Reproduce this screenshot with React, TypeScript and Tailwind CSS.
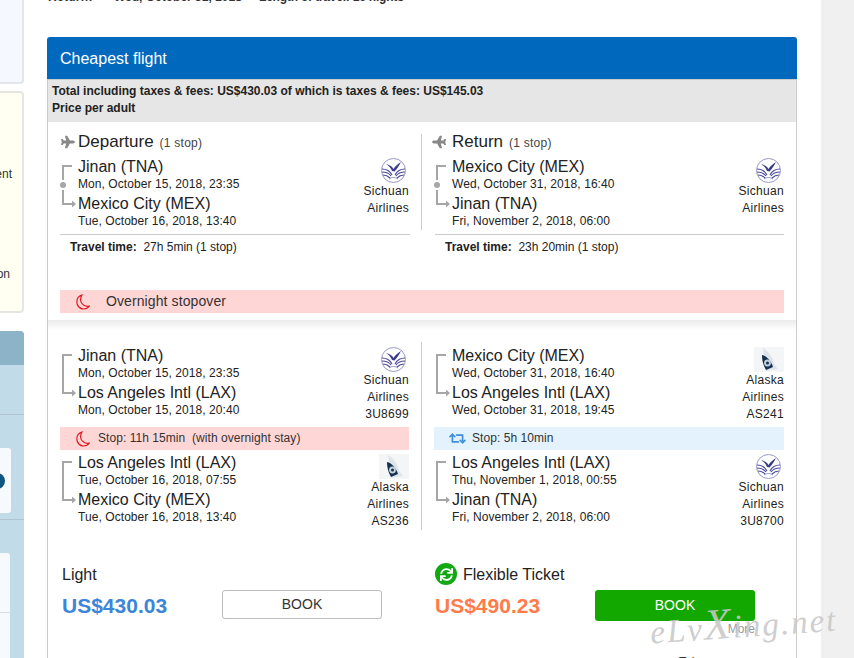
import { FaPlane, FaRetweet, FaSync } from 'react-icons/fa'

type Leg = { from: string; fromTime: string; to: string; toTime: string }

function RouteLine({ dot = false }: { dot?: boolean }) {
  return (
    <svg width="18" height="74" viewBox="0 0 18 74" className="shrink-0" fill="none">
      {dot ? (
        <>
          <path d="M12 10H3V24" stroke="#a6a6a6" strokeWidth="2" />
          <path d="M3 34V48H13" stroke="#a6a6a6" strokeWidth="2" />
          <circle cx="3" cy="29" r="3" fill="#a6a6a6" />
        </>
      ) : (
        <path d="M12 10H3V48H13" stroke="#a6a6a6" strokeWidth="2" />
      )}
      <path d="M12 44.5L16 48L12 51.5Z" fill="#a6a6a6" />
    </svg>
  )
}

function SichuanLogo() {
  return (
    <svg width="25" height="25" viewBox="0 0 25 25" fill="none">
      <circle cx="12.5" cy="12.5" r="12" fill="#ffffff" stroke="#9a9ac8" />
      <path d="M5 6C8 7 11 8 12.5 11C14 8 17 6 20 4C18 8 16 11 13.5 13.5L11 13C10 10 8 8 5 6Z" fill="#3c3c8c" />
      <path d="M1 11C6 11 9 13 11 17M1 14C5 14 8 15 10 18M2 17C5 17 7 18 9 20M24 11C19 11 16 13 14 17M24 14C20 14 17 15 15 18M23 17C20 17 18 18 16 20" stroke="#4a4a9c" strokeWidth="1.2" />
      <path d="M8 21C11 19 14 19 17 21" stroke="#8c8cc4" />
    </svg>
  )
}

function AlaskaLogo() {
  return (
    <div className="w-[30px] h-[25px] bg-[#f3f5f7]">
      <svg width="30" height="25" viewBox="0 0 30 25" fill="none">
        <path d="M9 1C14 4 19 10 20 17L24 22L12 24Z" fill="#dfe4ea" />
        <path d="M8 8C13 9 17 14 19 20L12 23C9 18 8 13 8 8Z" fill="#14304f" />
        <circle cx="13.5" cy="16" r="3.4" fill="#c6d2dc" />
        <circle cx="13.5" cy="16" r="1.5" fill="#14304f" />
      </svg>
    </div>
  )
}

function Airline({ logo, lines }: { logo: 'sichuan' | 'alaska'; lines: string[] }) {
  return (
    <div className="mt-[2px] flex flex-col items-end text-right text-[12px] leading-[17px] tracking-[0.3px] text-[#222]">
      {logo === 'sichuan' ? (
        <div className="w-[28px]">
          <SichuanLogo />
        </div>
      ) : (
        <AlaskaLogo />
      )}
      {lines.map((line) => (
        <span key={line}>{line}</span>
      ))}
    </div>
  )
}

function Segment({
  leg,
  dot,
  logo,
  lines,
}: {
  leg: Leg
  dot?: boolean
  logo: 'sichuan' | 'alaska'
  lines: string[]
}) {
  return (
    <div className="flex h-[74px] justify-between">
      <div className="flex">
        <RouteLine dot={dot} />
        <div className="text-[#222]">
          <div className="h-[21px] text-[16px] leading-[22px]">{leg.from}</div>
          <div className="h-[16px] text-[12px] leading-[14px] tracking-[0.07px]">{leg.fromTime}</div>
          <div className="h-[21px] text-[16px] leading-[22px]">{leg.to}</div>
          <div className="h-[16px] text-[12px] leading-[14px] tracking-[0.07px]">{leg.toTime}</div>
        </div>
      </div>
      <Airline logo={logo} lines={lines} />
    </div>
  )
}

function MoonIcon() {
  return (
    <svg width="14" height="16" viewBox="0 0 14 16" fill="none">
      <path d="M6 1C2.5 2 0.8 5 0.8 8C0.8 12 4 15 7.5 15C10 15 12 14 13.3 12.2C9 13 5 10 4.6 6.5C4.4 4.3 5 2.5 6 1Z" stroke="#e0141c" strokeWidth="1.2" />
    </svg>
  )
}

function DirectionHead({ title, back }: { title: string; back?: boolean }) {
  return (
    <div className="flex items-center h-[20px] mb-[4px] text-[#222]">
      {back ? (
        <FaPlane className="w-[14px] h-[14px] text-[#888888] -ml-[2px] mr-[6px] -scale-x-100" />
      ) : (
        <FaPlane className="w-[14px] h-[14px] text-[#888888] ml-[1px] mr-[3px]" />
      )}
      <span className="text-[17px] leading-[22px]">{title}</span>
      <span className="text-[12px] ml-[6px] mt-[2px] tracking-[0.25px] text-[#444]">(1 stop)</span>
    </div>
  )
}

function TravelTime({ time }: { time: string }) {
  return (
    <div className="border-t border-[#cccccc] mt-[4px] pt-[4px] pl-[10px] text-[12px] leading-[17px] text-[#222]">
      <b>Travel time:</b>&nbsp; {time} (1 stop)
    </div>
  )
}

function Fare({
  title,
  price,
  priceClass,
  flexible,
  children,
}: {
  title: string
  price: string
  priceClass: string
  flexible?: boolean
  children: React.ReactNode
}) {
  return (
    <div>
      <div className="flex items-center h-[22px] text-[16px] text-[#222]">
        {flexible && (
          <span className="w-[22px] h-[22px] mr-[6px] rounded-full bg-[#12a812] border border-dotted border-[#12a812] flex items-center justify-center">
            <FaSync className="w-[13px] h-[13px] text-white" />
          </span>
        )}
        <span className="pt-[2px]">{title}</span>
      </div>
      <div className="flex mt-[5px]">
        <div className={`w-[160px] pt-[4px] text-[21px] leading-[24px] font-bold ${priceClass}`}>{price}</div>
        {children}
      </div>
    </div>
  )
}

function Sidebar() {
  return (
    <div className="w-[24px] shrink-0 text-[12px] text-[#333]">
      <div className="h-[84px] bg-[#f5f9ff] border-r-2 border-b-2 border-[#e3e6ea] rounded-br-[4px]" />
      <div className="mt-[7px] h-[222px] bg-[#fffff2] border-2 border-l-0 border-[#e6e6e0] rounded-r-[4px] flex flex-col items-end pr-[10px]">
        <div className="mt-[74px] leading-[14px]">ent</div>
        <div className="mt-[86px] pr-[2px] leading-[14px]">on</div>
      </div>
      <div className="mt-[18px] h-[327px] bg-[#c2dbe8] rounded-tr-[4px] overflow-hidden">
        <div className="h-[34px] bg-[#8db3c8]" />
        <div className="h-[50px] border-b border-[#b0c4d0]" />
        <div className="mt-[33px] h-[65px] w-[11px] bg-[#f7fafc] rounded-r-[3px] flex items-center overflow-hidden">
          <span className="block shrink-0 w-[16px] h-[16px] -ml-[11px] bg-[#0f5580] rounded-full" />
        </div>
        <div className="mt-[6px] border-t border-[#b0c4d0]" />
        <div className="mt-[33px] h-[106px] w-[10px] bg-[#f7fafc] rounded-tr-[3px]">
          <div className="h-[60px] border-b border-[#d5dde2]" />
        </div>
      </div>
    </div>
  )
}

export default function App() {
  return (
    <div className='relative w-[854px] h-[658px] overflow-hidden bg-[#f0f0f0] flex font-["Liberation_Sans",Arial,sans-serif]'>
      <div className="w-[821px] h-full bg-white flex shrink-0">
        <Sidebar />
        <div className="pl-[23px] w-[773px]">
          {/* summary line, scrolled mostly out of view */}
          <div className="h-[37px] overflow-hidden">
            <div className="-mt-[10px] pl-px flex text-[12px] leading-[14px] font-bold text-[#333]">
              <span className="w-[66px] tracking-[0.3px]">Return:</span>
              <span className="w-[145px]">Wed, October 31, 2018</span>
              <span className="tracking-[-0.2px]">Length of travel: 16 nights</span>
            </div>
          </div>

          <div className="w-[750px]">
            <div className="h-[42px] bg-[#0069be] rounded-t-[3px] px-[13px] pt-[2px] flex items-center text-[16px] text-white">
              Cheapest flight
            </div>
            <div className="border-x border-[#cccccc] h-[600px]">
              <div className="h-[43px] bg-[#e6e6e6] border-t border-[#cccccc] px-[4px] pt-[3px] text-[12px] leading-[17px] font-bold text-[#222]">
                <div>Total including taxes &amp; fees: US$430.03 of which is taxes &amp; fees: US$145.03</div>
                <div>Price per adult</div>
              </div>

              <div className="h-[198px] bg-white pt-[10px] px-[12px]">
                <div className="flex">
                  <div className="w-[349px] mr-px">
                    <DirectionHead title="Departure" />
                    <Segment
                      dot
                      logo="sichuan"
                      lines={['Sichuan', 'Airlines']}
                      leg={{
                        from: 'Jinan (TNA)',
                        fromTime: 'Mon, October 15, 2018, 23:35',
                        to: 'Mexico City (MEX)',
                        toTime: 'Tue, October 16, 2018, 13:40',
                      }}
                    />
                  </div>
                  <div className="w-px ml-[11px] mt-[2px] bg-[#cccccc]" />
                  <div className="w-[350px] ml-[12px]">
                    <DirectionHead title="Return" back />
                    <Segment
                      dot
                      logo="sichuan"
                      lines={['Sichuan', 'Airlines']}
                      leg={{
                        from: 'Mexico City (MEX)',
                        fromTime: 'Wed, October 31, 2018, 16:40',
                        to: 'Jinan (TNA)',
                        toTime: 'Fri, November 2, 2018, 06:00',
                      }}
                    />
                  </div>
                </div>
                <div className="flex gap-[25px]">
                  <div className="w-[350px]">
                    <TravelTime time="27h 5min" />
                  </div>
                  <div className="w-[349px]">
                    <TravelTime time="23h 20min" />
                  </div>
                </div>
                <div className="mt-[34px] h-[23px] bg-[#ffd6d6] flex items-center pl-[16px] text-[14px] tracking-[0.1px] text-[#333]">
                  <MoonIcon />
                  <span className="ml-[16px]">Overnight stopover</span>
                </div>
              </div>

              {/* soft shadow under the summary block */}
              <div className="h-[10px] bg-linear-to-b from-[#ebebeb] to-white" />

              <div className="flex px-[12px] pt-[12px]">
                <div className="w-[349px] mr-px pt-[3px] pb-[4px]">
                  <Segment
                    logo="sichuan"
                    lines={['Sichuan', 'Airlines', '3U8699']}
                    leg={{
                      from: 'Jinan (TNA)',
                      fromTime: 'Mon, October 15, 2018, 23:35',
                      to: 'Los Angeles Intl (LAX)',
                      toTime: 'Mon, October 15, 2018, 20:40',
                    }}
                  />
                  <div className="mt-[8px] mb-[2px] h-[23px] bg-[#ffd6d6] flex items-center pl-[16px] text-[12px] tracking-[0.05px] text-[#333]">
                    <MoonIcon />
                    <span className="ml-[8px] pb-[2px]">Stop: 11h 15min&nbsp; (with overnight stay)</span>
                  </div>
                  <Segment
                    logo="alaska"
                    lines={['Alaska', 'Airlines', 'AS236']}
                    leg={{
                      from: 'Los Angeles Intl (LAX)',
                      fromTime: 'Tue, October 16, 2018, 07:55',
                      to: 'Mexico City (MEX)',
                      toTime: 'Tue, October 16, 2018, 13:40',
                    }}
                  />
                </div>
                <div className="w-px ml-[11px] bg-[#cccccc]" />
                <div className="w-[350px] ml-[12px] pt-[3px] pb-[4px]">
                  <Segment
                    logo="alaska"
                    lines={['Alaska', 'Airlines', 'AS241']}
                    leg={{
                      from: 'Mexico City (MEX)',
                      fromTime: 'Wed, October 31, 2018, 16:40',
                      to: 'Los Angeles Intl (LAX)',
                      toTime: 'Wed, October 31, 2018, 19:45',
                    }}
                  />
                  <div className="mt-[8px] mb-[2px] h-[23px] bg-[#e3f2fc] flex items-center pl-[15px] text-[12px] tracking-[0.05px] text-[#333]">
                    <FaRetweet className="w-[17px] h-[17px] text-[#3d8fdc]" />
                    <span className="ml-[6px] pb-[2px]">Stop: 5h 10min</span>
                  </div>
                  <Segment
                    logo="sichuan"
                    lines={['Sichuan', 'Airlines', '3U8700']}
                    leg={{
                      from: 'Los Angeles Intl (LAX)',
                      fromTime: 'Thu, November 1, 2018, 00:55',
                      to: 'Jinan (TNA)',
                      toTime: 'Fri, November 2, 2018, 06:00',
                    }}
                  />
                </div>
              </div>

              <div className="flex pt-[33px] pl-[14px]">
                <div className="w-[373px]">
                  <Fare title="Light" price="US$430.03" priceClass="text-[#3d85d8]">
                    <button className="w-[160px] h-[29px] bg-white border border-[#bbbbbb] rounded-[3px] text-[14px] text-[#333]">
                      BOOK
                    </button>
                  </Fare>
                </div>
                <div>
                  <Fare title="Flexible Ticket" price="US$490.23" priceClass="text-[#ff7b4a]" flexible>
                    <div className="flex flex-col items-end">
                      <button className="w-[160px] h-[31px] bg-[#12a800] rounded-[3px] text-[14px] text-white">
                        BOOK
                      </button>
                      <span className="mt-[1px] text-[12px] leading-[14px] text-[#999]">More</span>
                    </div>
                  </Fare>
                </div>
              </div>
              <div className="mt-[19px] flex pl-[631px] text-[12px] leading-[14px] text-[#333]">
                <span className="w-[96px]">Tab</span>
                <span>o</span>
              </div>
            </div>
          </div>
        </div>
      </div>

      {/* watermark over the page */}
      <div className='absolute left-[650px] top-[601px] -rotate-[4deg] font-["Liberation_Serif",serif] italic text-[33px] leading-[44px] tracking-[2px] text-[#c8c8c8]/90'>
        eLv<span className="text-[44px]">X</span>ing.net
      </div>
    </div>
  )
}
